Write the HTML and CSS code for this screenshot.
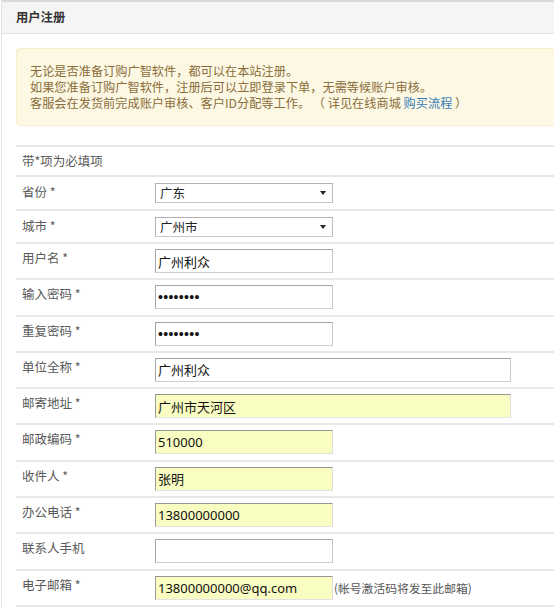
FILE: index.html
```html
<!DOCTYPE html>
<html lang="zh-CN">
<head>
<meta charset="utf-8">
<title>用户注册</title>
<link rel="stylesheet" href="styles.css">
</head>
<body>
<div class="panel">
  <div class="panel-heading">用户注册</div>
  <div class="panel-body">
    <div class="alert">
      <div class="alert-line">无论是否准备订购广智软件，都可以在本站注册。</div>
      <div class="alert-line">如果您准备订购广智软件，注册后可以立即登录下单，无需等候账户审核。</div>
      <div class="alert-line">客服会在发货前完成账户审核、客户ID分配等工作。 （ 详见在线商城 <a class="link" href="#">购买流程</a> ）</div>
    </div>
    <table class="form-table">
      <tr class="row-note"><td class="label" colspan="2">带*项为必填项</td></tr>
      <tr class="row-select">
        <td class="label">省份 *</td>
        <td class="field"><span class="select-wrap"><select class="select"><option>广东</option></select></span></td>
      </tr>
      <tr class="row-select">
        <td class="label">城市 *</td>
        <td class="field"><span class="select-wrap"><select class="select"><option>广州市</option></select></span></td>
      </tr>
      <tr class="row-input">
        <td class="label">用户名 *</td>
        <td class="field"><input class="input" type="text" value="广州利众"></td>
      </tr>
      <tr class="row-input">
        <td class="label">输入密码 *</td>
        <td class="field"><input class="input pwd" type="password" value="12345678"></td>
      </tr>
      <tr class="row-input">
        <td class="label">重复密码 *</td>
        <td class="field"><input class="input pwd" type="password" value="12345678"></td>
      </tr>
      <tr class="row-input">
        <td class="label">单位全称 *</td>
        <td class="field"><input class="input wide" type="text" value="广州利众"></td>
      </tr>
      <tr class="row-input">
        <td class="label">邮寄地址 *</td>
        <td class="field"><input class="input wide filled" type="text" value="广州市天河区"></td>
      </tr>
      <tr class="row-input">
        <td class="label">邮政编码 *</td>
        <td class="field"><input class="input filled" type="text" value="510000"></td>
      </tr>
      <tr class="row-input">
        <td class="label">收件人 *</td>
        <td class="field"><input class="input filled" type="text" value="张明"></td>
      </tr>
      <tr class="row-input">
        <td class="label">办公电话 *</td>
        <td class="field"><input class="input filled" type="text" value="13800000000"></td>
      </tr>
      <tr class="row-input">
        <td class="label">联系人手机</td>
        <td class="field"><input class="input" type="text" value=""></td>
      </tr>
      <tr class="row-input">
        <td class="label">电子邮箱 *</td>
        <td class="field"><input class="input filled" type="text" value="13800000000@qq.com"><span class="hint">(帐号激活码将发至此邮箱)</span></td>
      </tr>
    </table>
  </div>
</div>
</body>
</html>
```

FILE: styles.css
```css
html, body {
  margin: 0;
  padding: 0;
  background: #fff;
  overflow: hidden;
}

body {
  font-family: "Noto Sans CJK SC", "Noto Sans", sans-serif;
  font-size: 12px;
  color: #555;
}

.panel {
  margin-left: 1px;
  border-top: 2px solid #dadada;
  border-left: 1px solid #e4e4e4;
  background: #fff;
}

.panel-heading {
  height: 31px;
  line-height: 31px;
  padding-left: 14px;
  background: #f5f5f5;
  border-bottom: 1px solid #e3e3e3;
  color: #333;
  font-weight: bold;
  font-size: 12.3px;
}

.panel-body {
  padding: 14px 0 0 14px;
}

.alert {
  background: #fcf8e3;
  border: 1px solid #faebcc;
  border-right: none;
  border-radius: 4px 0 0 4px;
  padding: 14px 0 14px 13px;
  color: #8a6d3b;
  font-size: 12.2px;
}

.alert-line {
  height: 16px;
  line-height: 16px;
  white-space: nowrap;
}

.link {
  color: #3a7db5;
  text-decoration: none;
}

.form-table {
  margin-top: 19px;
  width: 100%;
  border-collapse: collapse;
  border-top: 2px solid #e8e8e8;
}

.form-table td {
  border-bottom: 2px solid #e8e8e8;
  vertical-align: top;
  padding: 0;
}

.label {
  width: 133px;
  padding-left: 6px !important;
  font-size: 12.5px;
  line-height: 18px;
  color: #595959;
}

.row-note td {
  padding-top: 5px !important;
  padding-bottom: 5px !important;
}

.row-select td {
  padding-top: 6px !important;
  padding-bottom: 5.5px !important;
}

.row-input td.label {
  padding-top: 5px !important;
}

.row-input td.field {
  padding-top: 5px !important;
  padding-bottom: 5.3px !important;
}

.field {
  line-height: 0;
  white-space: nowrap;
}

.select-wrap {
  position: relative;
  display: inline-block;
  vertical-align: top;
}

.select-wrap::after {
  content: "";
  position: absolute;
  top: 8px;
  right: 7px;
  border-left: 3px solid transparent;
  border-right: 3px solid transparent;
  border-top: 4px solid #222;
  pointer-events: none;
}

.select {
  -webkit-appearance: none;
  appearance: none;
  box-sizing: border-box;
  width: 178px;
  height: 20px;
  margin: 0;
  padding: 0 0 0 4px;
  border: 1px solid;
  border-color: #b3b3b3 #bdbdbd #c6c6c6 #b3b3b3;
  border-radius: 0;
  background: #fff;
  font-family: "Noto Sans CJK SC", sans-serif;
  font-size: 12.5px;
  line-height: 18px;
  color: #222;
  outline: none;
}

.input {
  box-sizing: border-box;
  width: 178px;
  height: 24px;
  margin: 0;
  padding: 0 2px;
  border: 1px solid;
  border-color: #a5a5a5 #c6c6c6 #cfcfcf #a5a5a5;
  border-radius: 0;
  background: #fff;
  font-family: "Noto Sans", "Noto Sans CJK SC", sans-serif;
  font-size: 13px;
  color: #111;
  vertical-align: top;
  outline: none;
}

.input.wide {
  width: 356px;
}

.input.filled {
  background: #fafdc2;
  border-color: #959595 #dcdcdc #e2e2e2 #9a9a9a;
}

.input.pwd {
  font-family: "Liberation Sans", sans-serif;
  font-size: 14px;
  letter-spacing: 0.3px;
}

.hint {
  display: inline-block;
  vertical-align: top;
  margin-left: 1px;
  font-size: 11.8px;
  line-height: 24px;
  color: #555;
}
```
